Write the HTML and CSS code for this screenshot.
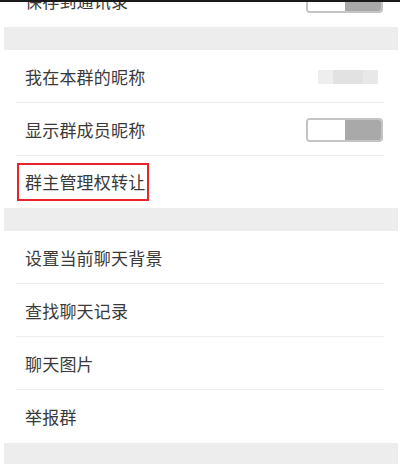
FILE: index.html
```html
<!DOCTYPE html>
<html lang="zh-CN">
<head>
<meta charset="utf-8">
<link rel="stylesheet" href="styles.css">
</head>
<body>
<div class="topline"></div>
<div class="page">
  <div class="group">
    <div class="row">
      <span class="label">保存到通讯录</span>
      <span class="toggle"><span class="knob"></span><span class="track"></span></span>
    </div>
  </div>
  <div class="band"></div>
  <div class="group">
    <div class="row divided">
      <span class="label">我在本群的昵称</span>
      <span class="nick"></span>
    </div>
    <div class="row divided">
      <span class="label">显示群成员昵称</span>
      <span class="toggle"><span class="knob"></span><span class="track"></span></span>
    </div>
    <div class="row last">
      <span class="label boxed">群主管理权转让</span>
    </div>
  </div>
  <div class="band"></div>
  <div class="group">
    <div class="row divided"><span class="label">设置当前聊天背景</span></div>
    <div class="row divided"><span class="label">查找聊天记录</span></div>
    <div class="row divided"><span class="label">聊天图片</span></div>
    <div class="row"><span class="label">举报群</span></div>
  </div>
  <div class="band bottom"></div>
</div>
</body>
</html>
```
FILE: styles.css
```css
html, body {
  margin: 0;
  padding: 0;
  background: #ffffff;
  width: 400px;
  height: 476px;
  overflow: hidden;
}
body {
  position: relative;
  font-family: "Noto Sans CJK SC", "Noto Sans", sans-serif;
  color: #3a3a3a;
}
.topline {
  position: absolute;
  left: 0;
  top: 0;
  width: 400px;
  height: 2px;
  background: #1a1a1a;
  z-index: 2;
}
.page {
  margin-top: -26px;
  display: flex;
  flex-direction: column;
}
.group {
  display: flex;
  flex-direction: column;
}
.row {
  position: relative;
  height: 53px;
  display: flex;
  align-items: center;
  justify-content: space-between;
  padding: 0 17px 0 25px;
  box-sizing: border-box;
}
.row.divided::after {
  content: "";
  position: absolute;
  left: 16px;
  right: 16px;
  bottom: 0;
  height: 1px;
  background: #ececec;
}
.row.last {
  height: 52px;
}
.label {
  font-size: 17px;
  line-height: 20px;
  letter-spacing: 0.2px;
}
.boxed {
  margin-left: -8px;
  padding: 8px 2px 8px 6px;
  border: 2px solid #e8232c;
  line-height: 18px;
}
.toggle {
  display: flex;
  width: 77px;
  height: 24px;
  box-sizing: border-box;
  border: 2px solid #c4c4c4;
  border-radius: 4px;
  overflow: hidden;
}
.knob {
  width: 37px;
  background: #ffffff;
}
.track {
  flex: 1;
  background: #a9a9a9;
}
.nick {
  width: 60px;
  height: 14px;
  margin-right: 5px;
  background: linear-gradient(90deg, #eeeeee 0, #eeeeee 15px, #e2e2e2 15px, #e2e2e2 45px, #e8e8e8 45px);
}
.band {
  height: 23px;
  margin: 0 2px 0 4px;
  background: #ededed;
}
.band.bottom {
  height: 21px;
}
```
